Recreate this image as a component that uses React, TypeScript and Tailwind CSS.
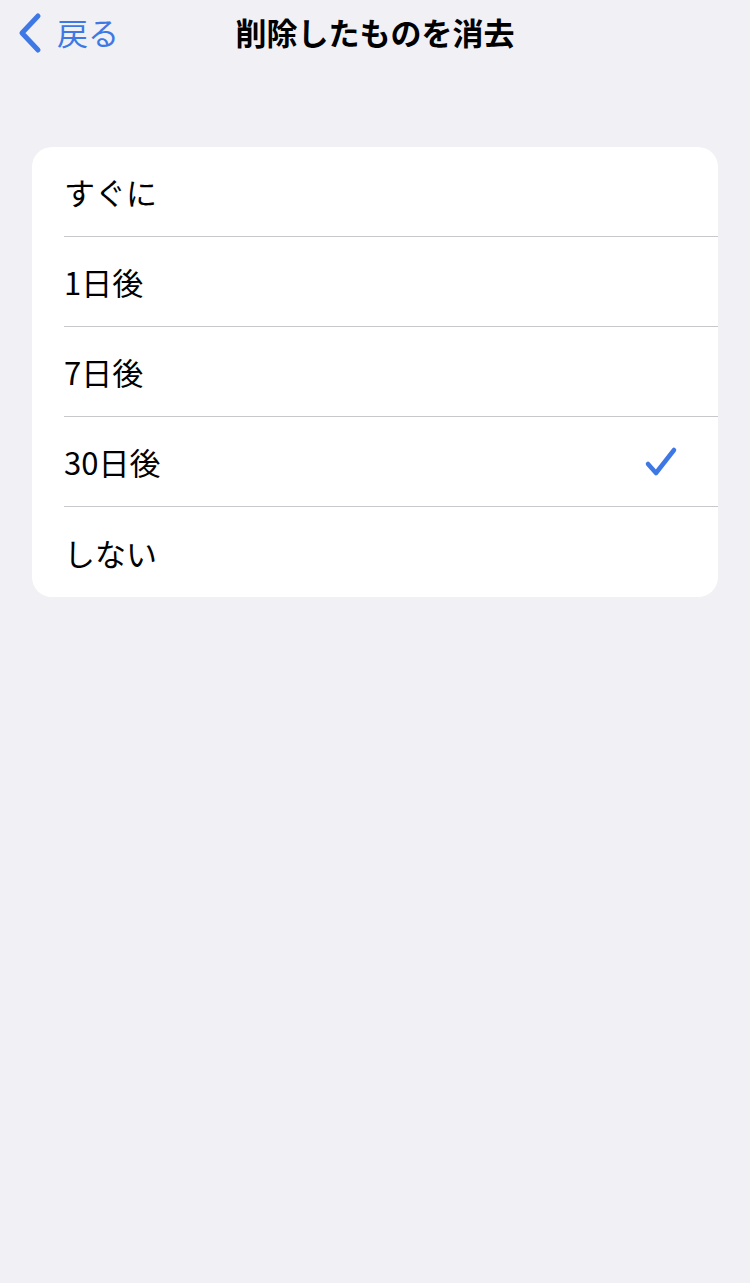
export default function App() {
  const rows = ["すぐに", "1日後", "7日後", "30日後", "しない"];
  const font = { fontFamily: '"Noto Sans CJK JP", "Noto Sans", sans-serif' };
  return (
    <div className="min-h-[1283px] w-[750px] bg-[#f0f0f5]" style={font}>
      <div className="relative flex h-[62px] items-center justify-center">
        <div className="absolute left-[16px] top-[12px] flex items-center">
          <svg width="28" height="42" viewBox="0 0 28 42">
            <path d="M22 4 L6 21 L22 38" fill="none" stroke="#3e78e4" strokeWidth="5" strokeLinecap="round" strokeLinejoin="round" />
          </svg>
          <span className="ml-[13px] -mt-[4px] text-[31px] leading-none text-[#3e78e4]">戻る</span>
        </div>
        <span className="text-[31px] font-bold leading-none text-black">削除したものを消去</span>
      </div>
      <div className="mx-[32px] mt-[85px] overflow-hidden rounded-[20px] bg-white">
        {rows.map((r, i) => (
          <div key={r} className="flex h-[90px] flex-col pl-[32px]">
            <div className={`flex flex-1 items-center pr-[40px] ${i < rows.length - 1 ? "border-b border-[#c8c8cc]" : ""}`}>
              <span className="flex-1 text-[31px] leading-none text-black">{r}</span>
              {i === 3 && (
                <svg width="34" height="32" viewBox="0 0 34 32">
                  <path d="M4 18 L12 27 L30 4" fill="none" stroke="#3e78e4" strokeWidth="4.5" strokeLinecap="round" strokeLinejoin="round" />
                </svg>
              )}
            </div>
          </div>
        ))}
      </div>
    </div>
  );
}
